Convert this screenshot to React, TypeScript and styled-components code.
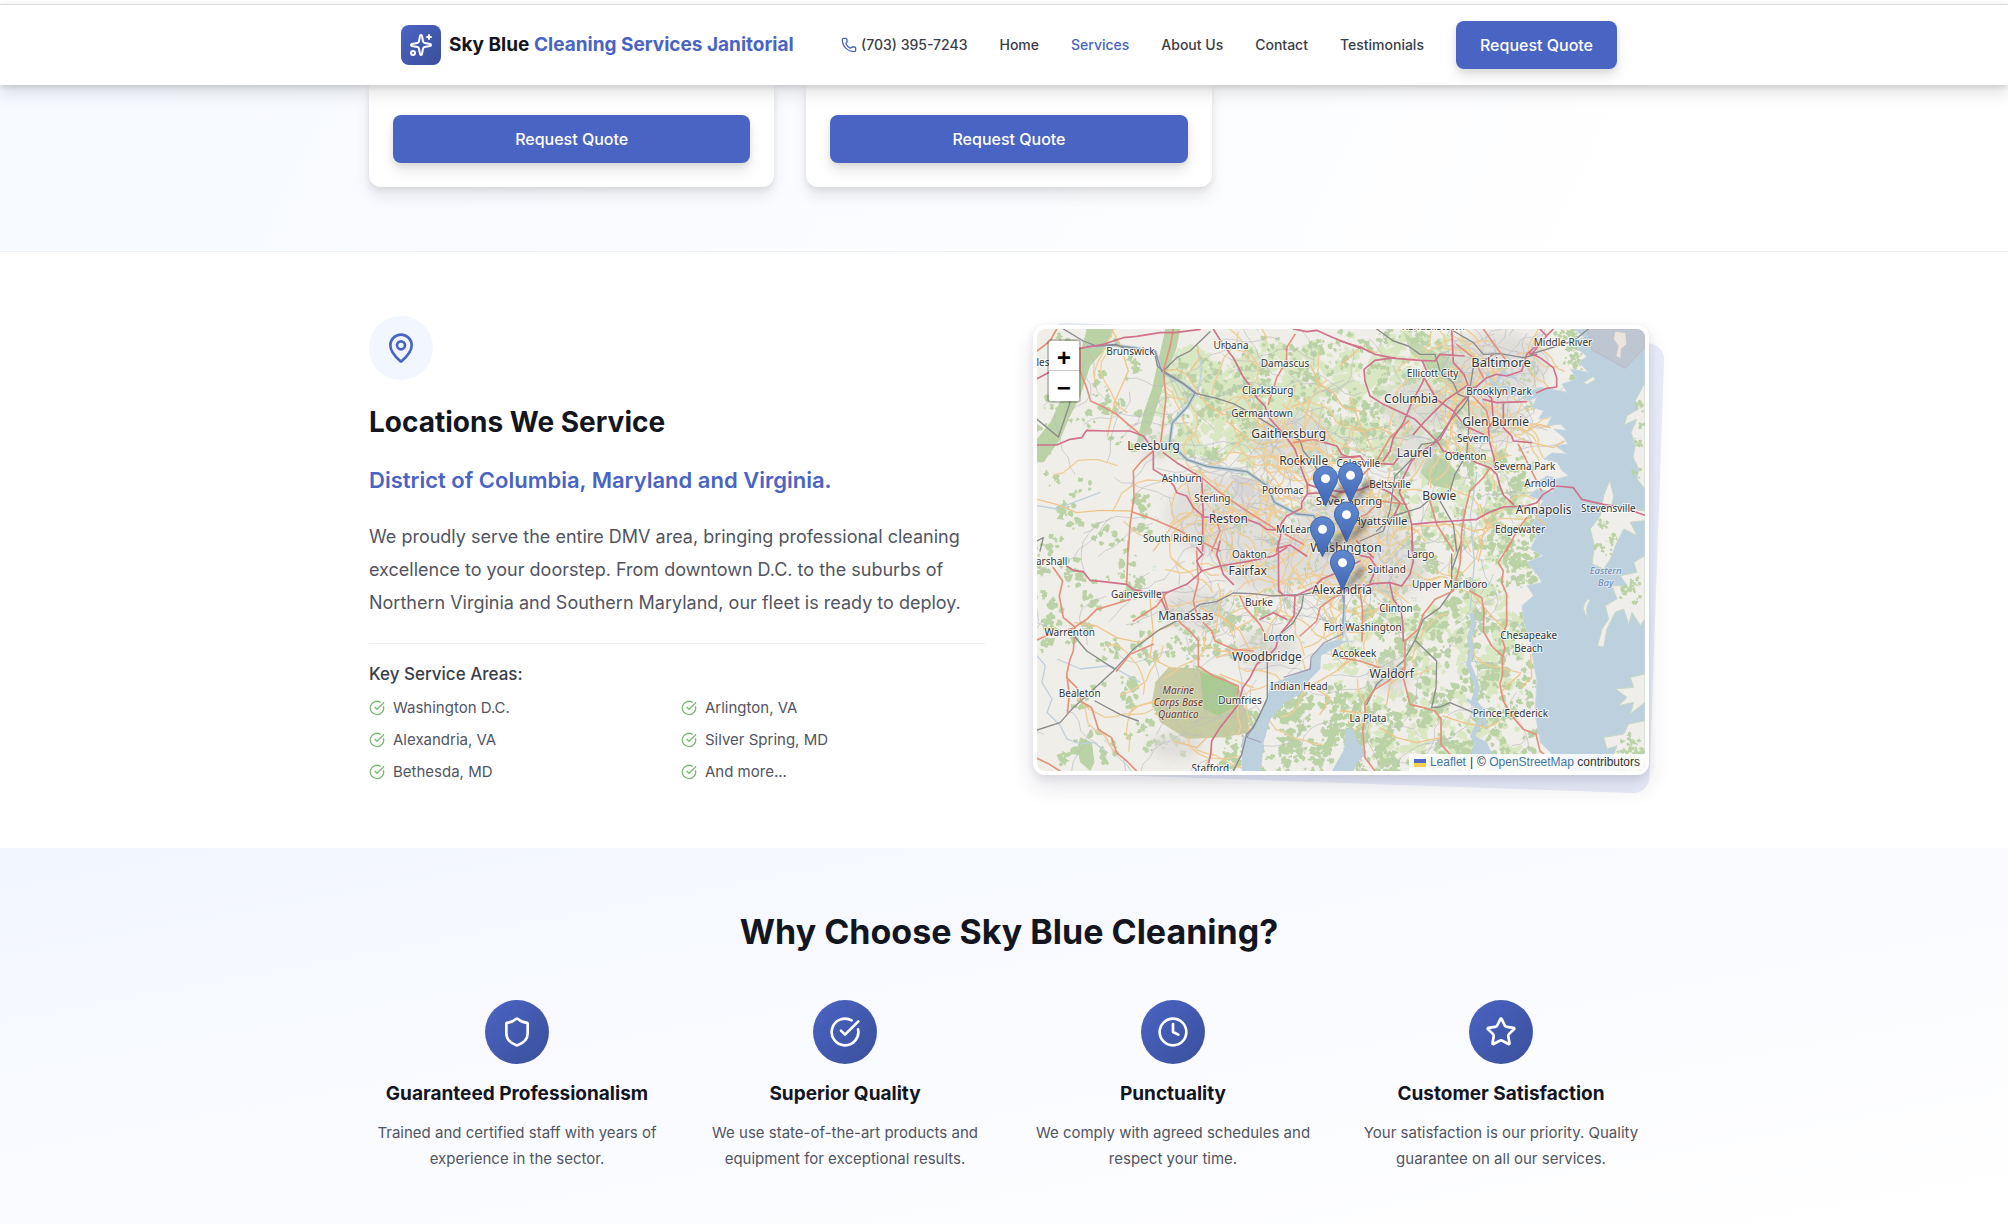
import React from "react";
import styled, { createGlobalStyle } from "styled-components";
import {
  CircleCheckBig,
  Clock,
  MapPin,
  Phone,
  Shield,
  Sparkles,
  Star,
  type LucideIcon,
} from "lucide-react";

const color = {
  brand: "#4a64c3",
  brandDark: "#3a4f9b",
  ink: "#13151f",
  nav: "#3a3e48",
  body: "#52555f",
  tint: "#f2f6ff",
  line: "#eff0f3",
  green: "#7cba74",
};

const GlobalStyle = createGlobalStyle`
  *, *::before, *::after { box-sizing: border-box; }
  body {
    margin: 0;
    background: #fff;
    color: ${color.ink};
    font-family: Inter, "Noto Sans", sans-serif;
    -webkit-font-smoothing: antialiased;
  }
  h1, h2, h3, p, ul { margin: 0; padding: 0; }
  ul { list-style: none; }
  a { text-decoration: none; color: inherit; }
`;

const Page = styled.div`
  display: flex;
  flex-direction: column;
  min-height: 100vh;
  overflow: clip;
`;

const Container = styled.div`
  width: 100%;
  max-width: 1280px;
  margin: 0 auto;
`;

/* ---------- header ---------- */

const Header = styled.header`
  position: sticky;
  top: 0;
  z-index: 10;
  margin-top: 4px;
  padding: 0 22px 0 32px;
  background: #fff;
  border-top: 1px solid #dddddf;
  box-shadow: 0 8px 16px rgba(0, 0, 0, 0.12), 0 2px 5px rgba(0, 0, 0, 0.12);
`;

const HeaderRow = styled(Container)`
  display: flex;
  align-items: center;
  justify-content: space-between;
  min-height: 80px;
  padding: 0 32px;
`;

const Brand = styled.a`
  display: flex;
  align-items: center;
  gap: 8px;
  font-size: 19px;
  line-height: 28px;
  font-weight: 700;
`;

const BrandMark = styled.span`
  display: flex;
  align-items: center;
  justify-content: center;
  width: 40px;
  height: 40px;
  border-radius: 8px;
  color: #fff;
  background: linear-gradient(135deg, ${color.brand}, ${color.brandDark});
`;

const Accent = styled.span`
  color: ${color.brand};
`;

const Nav = styled.nav`
  display: flex;
  align-items: center;
  gap: 32px;
`;

const NavLink = styled.a<{ $active?: boolean }>`
  display: flex;
  align-items: center;
  gap: 4px;
  font-size: 14px;
  line-height: 20px;
  font-weight: 500;
  color: ${(p) => (p.$active ? color.brand : color.nav)};
  svg { color: ${color.brand}; }
`;

const QuoteButton = styled.button<{ $wide?: boolean }>`
  width: ${(p) => (p.$wide ? "100%" : "auto")};
  height: 48px;
  padding: 0 24px;
  border: 0;
  border-radius: 8px;
  background: ${color.brand};
  color: #fff;
  font-family: inherit;
  font-size: 16px;
  line-height: 24px;
  font-weight: 500;
  cursor: pointer;
  box-shadow: 0 8px 14px rgba(0, 0, 0, 0.09), 0 3px 6px rgba(0, 0, 0, 0.08);
`;

/* ---------- service cards ---------- */

const CardsSection = styled.section`
  padding: 0 22px 64px 32px;
  border-bottom: 1px solid ${color.line};
  background: linear-gradient(115deg, #f6f9ff, #fbfcff 45%, #ffffff 85%);
`;

const CardGrid = styled(Container)`
  display: grid;
  grid-template-columns: repeat(3, 1fr);
  gap: 32px;
`;

const Card = styled.article`
  padding: 30px 24px 24px;
  border-radius: 0 0 12px 12px;
  background: #fff;
  box-shadow: 0 10px 15px rgba(0, 0, 0, 0.08), 0 3px 6px rgba(0, 0, 0, 0.08);
`;

/* ---------- locations ---------- */

const Locations = styled.section`
  padding: 64px 22px 64px 32px;
`;

const LocationGrid = styled(Container)`
  display: grid;
  grid-template-columns: 1fr 1fr;
  gap: 48px;
  align-items: center;
`;

const IconDisc = styled.div<{ $solid?: boolean }>`
  display: flex;
  align-items: center;
  justify-content: center;
  width: 64px;
  height: 64px;
  border-radius: 50%;
  color: ${(p) => (p.$solid ? "#fff" : color.brand)};
  background: ${(p) =>
    p.$solid ? `linear-gradient(135deg, ${color.brand}, ${color.brandDark})` : color.tint};
`;

const Title = styled.h2`
  margin-top: 24px;
  font-size: 28px;
  line-height: 36px;
  font-weight: 700;
`;

const Subtitle = styled.p`
  margin-top: 24px;
  font-size: 22px;
  line-height: 32px;
  font-weight: 600;
  color: ${color.brand};
`;

const Lead = styled.p`
  margin: 24px 0;
  font-size: 18px;
  line-height: 33px;
  color: ${color.body};
`;

const Areas = styled.div`
  padding-top: 16px;
  border-top: 1px solid ${color.line};
`;

const AreasTitle = styled.h3`
  margin-bottom: 8px;
  font-size: 17px;
  line-height: 28px;
  font-weight: 500;
  color: ${color.nav};
`;

const AreaList = styled.ul`
  display: grid;
  grid-template-columns: 1fr 1fr;
  gap: 8px;
`;

const Area = styled.li`
  display: flex;
  align-items: center;
  gap: 8px;
  font-size: 15px;
  line-height: 24px;
  color: ${color.body};
  svg { color: ${color.green}; }
`;

/* ---------- map ---------- */

const MapWrap = styled.div`
  position: relative;
  &::before {
    content: "";
    position: absolute;
    inset: 0;
    border-radius: 16px;
    background: #eaedf9;
    transform: translate(8px, 8px) rotate(2deg);
  }
`;

const MapFrame = styled.div`
  position: relative;
  height: 450px;
  overflow: hidden;
  border: 4px solid #fff;
  border-radius: 12px;
  background: #fff;
  box-shadow: 0 12px 22px rgba(30, 35, 70, 0.12), 0 3px 8px rgba(30, 35, 70, 0.09);
`;

const MapSvg = styled.svg`
  display: block;
  width: 100%;
  height: 100%;
  border-radius: 8px 8px 0 0;
  font-family: "Noto Sans", sans-serif;
`;

const ZoomControl = styled.div`
  position: absolute;
  top: 10px;
  left: 10px;
  display: flex;
  flex-direction: column;
  border: 2px solid rgba(0, 0, 0, 0.2);
  border-radius: 4px;
  background-clip: padding-box;
`;

const ZoomButton = styled.button`
  width: 30px;
  height: 30px;
  padding: 8px 0 0;
  border: 0;
  background: #fff;
  color: #000;
  font: bold 24px/22px "Liberation Mono", monospace;
  cursor: pointer;
  &:first-child {
    border-bottom: 1px solid #ccc;
    border-radius: 2px 2px 0 0;
  }
  &:last-child { border-radius: 0 0 2px 2px; }
`;

const Attribution = styled.div`
  position: absolute;
  right: 0;
  bottom: 0;
  display: flex;
  align-items: center;
  gap: 4px;
  padding: 0 5px;
  background: rgba(255, 255, 255, 0.85);
  color: #333;
  font: 12px/17px "Liberation Sans", Arial, sans-serif;
  a { color: #3f76a8; }
`;

type Quad = "nw" | "ne" | "sw" | "se";
const shift: Record<Quad, [number, number]> = {
  nw: [-51, -54],
  ne: [909, -54],
  sw: [-51, 636],
  se: [909, 636],
};

const motorways: Record<Quad, string> = {
  nw: "M580 54L605 95 640 140 668 195 690 225 712 262 735 285 745 318 778 355 803 385 825 415 838 455 850 490 862 520 862 548 845 575 845 592 800 615 782 640 782 675 770 720M51 203L85 185 110 170 130 125 180 112 250 100 310 80 350 76 420 65 470 64 540 55M51 402L110 402 150 385 185 380 200 358 260 360 330 360 370 375 385 395 400 420 400 475 440 500 462 525 470 545 500 555 520 590 548 615 548 720M430 425L470 455 545 500 550 615M545 618L610 620 680 625 720 640 740 655 780 658M820 54L860 62 890 58 940 80 1020 112M862 520L900 532 960 542 1020 535M915 395L950 405 965 430 990 440 1020 436M862 548L915 545 950 560",
  ne: "M0 90L60 108 105 130 165 142 240 148 285 150 300 130 372 135M165 140L105 148 72 175 75 210 90 255 130 280 185 305 225 325 250 350 290 390 310 420 360 430 410 455 450 470 470 490 480 525 490 552 520 580M335 54L340 155 372 190 385 225 430 240 455 262 460 330 445 350 448 390 462 440 465 475M247 150L260 180 245 220 215 275 190 335 160 380 150 420 130 450M640 54L605 90 560 130 545 180 500 195 470 190 440 200 400 235 350 290 320 350 300 385 240 425 215 450 190 500 178 545 205 600 215 640 218 720M255 205L290 265 340 300 375 345 430 370M380 225L320 265 255 330 220 370M215 640L270 635 340 630 410 625 445 605 490 588 560 585 590 575 610 550 650 525 700 530 725 565 790 580 850 590 915 613M570 125L600 140 640 170 650 200 650 228 620 232 590 245M600 54L620 75 575 130M430 265L470 275 560 272M490 280L490 350 515 375 520 390 575 395M0 440L60 435 75 455 160 460 175 440M0 545L50 540 100 520 150 545 180 575 160 620",
  sw: "M140 75L160 88 190 92 210 118 250 122 320 130 340 145 380 155 440 155 500 130 530 105 545 90 600 75 680 62 760 45 800 20M530 20L548 40 530 60 545 90M600 0L590 40 610 100 640 130M775 0L776 150 790 162 825 165 822 225 800 255 775 285 768 320 750 340 710 370 690 410 668 440 655 490 632 520 600 560 575 600 572 640 560 690M780 20L810 12 860 45M825 165L880 140 905 115 950 95 1020 60M420 165L440 210 460 220M720 235L760 215 800 235",
  se: "M0 150L60 140 100 128 150 125 185 135 210 100 220 60 215 0M0 30L90 50 110 80 90 125M150 130L160 175 182 205 188 240 190 300M50 0L100 50",
};
const primaries: Record<Quad, string> = {
  nw: "M460 54L452 100 430 180 438 260 430 330 420 410M180 115L180 180 200 230 212 270 255 290 290 310 330 345 355 365M400 420L365 450 340 480 342 560 330 640 325 720M335 602L400 625 470 655 560 700 600 720M825 70L800 110 800 150 770 200 745 280M51 120L90 90 110 54M545 500L600 545 680 600 760 650 850 700M580 600L600 660 575 720M915 395L880 385 820 395",
  ne: "M535 400L560 450 580 490 605 540M450 470L430 500 390 540 375 600 365 660 362 720M560 620L530 660 500 720M0 640L80 610 120 570 200 580M430 54L470 110 500 150M350 100L400 140 430 200M205 330L150 380 110 450 60 500M385 240L440 300 450 345M270 570L290 640 340 720",
  sw: "M100 80L128 120 118 165 130 230 165 258 160 330 150 355 140 400 148 460 142 520M165 258L200 235 230 205 275 192 330 175M51 297L90 280 160 262M430 160L445 210 480 245 510 270 535 300 535 375 580 405 620 420 655 435 652 460M140 410L170 440 185 482 215 500 235 565 275 590 290 635 320 660 350 690M51 652L85 668 120 690M550 245L575 270 585 300 640 325 700 330M530 30L535 120 520 180 535 240M325 0L320 130M660 165L675 200 720 250 730 270M1020 130L940 170 900 200 890 240 840 285M440 155L410 195 340 240M290 390L330 340 400 310",
  se: "M515 0L475 65 490 90 485 125 500 160 500 250 485 290 495 320 488 350M390 150L425 170 432 210 430 270 455 315 487 345 488 400 480 430 490 480 520 530 550 565 588 580 600 630 612 640M365 0L360 70 340 150 285 175 250 220 235 265 195 300 195 380 190 410 210 490 250 500 285 510 303 535 303 610 330 640M195 378L145 420 105 445 75 485 75 525 68 570 75 650 105 690M60 150L68 210 66 300M0 350L60 360 120 380",
};
const secondaries: Record<Quad, string> = {
  nw: "M51 565L110 580 170 605 240 598 335 600M275 54L300 100 325 180 285 270 262 375M430 180L470 175 500 190 530 235 560 280 610 310 700 320 745 365M530 100L540 140 510 180M870 160L900 220 940 245 970 290 1020 300M650 720L600 680 640 600 600 560 640 510M620 330L680 380 720 400 780 390M500 510L520 600 460 640 400 720M850 300L920 360 940 395",
  ne: "M0 165L60 110 110 125M0 330L70 360 120 350 170 380M30 260L60 340 100 420M575 395L640 410 670 390M520 340L560 360 600 340 630 350M420 580L440 640 420 700M300 640L350 640 400 660 500 640M600 560L590 620 620 640",
  sw: "M165 245L230 255 290 290 360 305 400 275 460 250M390 170L400 280 390 350 470 390M550 310L600 330 680 335 710 350M590 350L660 325 720 320M600 400L700 440M880 430L950 390 990 350M880 440L930 470 900 520M560 590L530 620 460 600M540 200L610 230 660 270 690 330",
  se: "M400 160L450 220 490 260M0 380L60 340M120 560L170 590 230 605 300 590M0 510L60 515 120 530M310 525L370 545 440 560 480 540M200 390L150 430 140 490M540 440L575 410 572 340M480 455L540 400M430 0L415 60",
};
const rails: Record<Quad, string> = {
  nw: "M130 54L190 90 230 105 290 100 345 130M405 130L412 165 430 180 480 210 530 248 590 262 640 278 700 310 740 335 790 365 840 388 850 420 875 450 900 490M430 180L470 140 510 120 570 62M51 325L115 378 145 290 155 255M51 690L70 680 60 720",
  ne: "M110 54L160 90 205 105 240 130 285 130 300 180 340 215 355 250 385 262 370 285 330 330 300 375 280 395 245 400 210 450 165 495 158 540 150 600 130 660 60 690M385 262L388 330 380 430 345 490 330 540 270 565 240 590 160 615 110 660M330 54L400 95 430 130 480 128 550 140 590 130M385 260L400 170 460 130M570 130L700 90 745 54M300 570L340 640 350 720",
  sw: "M51 567L120 545 160 500 280 390 340 325 420 265 480 235 540 190 590 182 640 156 700 158 760 165 850 160 905 150M850 165L845 200 820 245 780 280M742 365L742 470 720 520 700 560 680 580 665 640 640 690M150 270L200 330 285 385M225 480L300 520 355 540",
  se: "M335 40L335 150 300 200 250 235 225 298 190 360 110 430 80 490M225 298L290 360 288 440 275 500 300 498 330 485 400 515M365 0L335 90",
};

const potomac =
  "M150 52L230 48 354 66 374 128 440 165 474 192 452 232 406 282 398 340 450 392 510 412 630 428 690 470 712 520 780 555 830 560 880 640 905 700 920 820";
const patuxent = "M395 215L402 250 388 290 395 330 385 370 402 410 412 440 402 480 430 515 415 550 398 585 430 630 462 690";

type Label = [Quad, number, number, string, number?];
const labels: Label[] = [
  ["nw", 331, 133, "Brunswick"], ["nw", 633, 115, "Urbana"], ["nw", 795, 167, "Damascus"],
  ["nw", 743, 250, "Clarksburg"], ["nw", 726, 319, "Germantown"], ["nw", 806, 381, "Gaithersburg", 36],
  ["nw", 401, 416, "Leesburg", 36], ["nw", 851, 461, "Rockville", 36], ["nw", 485, 513, "Ashburn"],
  ["nw", 577, 572, "Sterling"], ["nw", 788, 549, "Potomac"], ["nw", 625, 635, "Reston", 36],
  ["nw", 823, 666, "McLean"], ["nw", 459, 692, "South Riding"], ["nw", 69, 166, "les"],
  ["ne", 669, 104, "Middle River"], ["ne", 483, 168, "Baltimore", 39], ["ne", 280, 56, "Randallstown"],
  ["ne", 278, 198, "Ellicott City"], ["ne", 477, 252, "Brooklyn Park"], ["ne", 213, 275, "Columbia", 36],
  ["ne", 467, 346, "Glen Burnie", 36], ["ne", 399, 394, "Severn"], ["ne", 223, 438, "Laurel", 36],
  ["ne", 377, 448, "Odenton"], ["ne", 554, 476, "Severna Park"], ["ne", 55, 468, "Colesville"],
  ["ne", 150, 531, "Beltsville"], ["ne", 600, 529, "Arnold"], ["ne", 298, 566, "Bowie", 36],
  ["ne", 611, 608, "Annapolis", 36], ["ne", 805, 602, "Stevensville"], ["ne", 27, 583, "Silver Spring", 34],
  ["ne", 120, 643, "Hyattsville", 34], ["ne", 540, 667, "Edgewater"],
  ["sw", 95, 73, "arshall"], ["sw", 688, 52, "Oakton"], ["sw", 683, 102, "Fairfax", 36],
  ["sw", 349, 170, "Gainesville"], ["sw", 717, 196, "Burke"], ["sw", 498, 236, "Manassas", 36],
  ["sw", 149, 286, "Warrenton"], ["sw", 777, 299, "Lorton"], ["sw", 741, 361, "Woodbridge", 36],
  ["sw", 179, 468, "Bealeton"], ["sw", 837, 446, "Indian Head"], ["sw", 660, 490, "Dumfries"],
  ["sw", 571, 694, "Stafford"],
  ["se", 18, 34, "Washington", 38], ["se", 6, 160, "Alexandria", 36], ["se", 242, 51, "Largo"],
  ["se", 140, 97, "Suitland"], ["se", 329, 142, "Upper Marlboro"], ["se", 168, 213, "Clinton"],
  ["se", 68, 269, "Fort Washington"], ["se", 43, 347, "Accokeek"], ["se", 155, 411, "Waldorf", 36],
  ["se", 84, 543, "La Plata"], ["se", 511, 528, "Prince Frederick"], ["se", 566, 295, "Chesapeake"],
  ["se", 566, 333, "Beach"],
];

/* Pin tips, in map units. */
const pins: [number, number][] = [[865, 530], [940, 520], [928, 638], [856, 682], [916, 782]];

/* Small seeded generator, so the scattered woods and lanes are the same on every render. */
const seeded = (seed: number) => () => {
  seed = (seed * 1664525 + 1013904223) % 4294967296;
  return seed / 4294967296;
};

const patches = (seed: number, count: number, x: number, y: number, w: number, h: number, r: number) => {
  const rnd = seeded(seed);
  let d = "";
  for (let i = 0; i < count; i++) {
    const cx = x + rnd() * w;
    const cy = y + rnd() * h;
    const parts = 3 + Math.floor(rnd() * 5);
    for (let k = 0; k < parts; k++) {
      const px = cx + (rnd() - 0.5) * r * 3.4;
      const py = cy + (rnd() - 0.5) * r * 3.4;
      const size = r * (0.25 + rnd() * 0.8);
      for (let a = 0; a < 9; a++) {
        const q = size * (0.4 + rnd() * 0.8);
        const t = (a / 9) * Math.PI * 2;
        d += `${a ? "L" : "M"}${Math.round(px + Math.cos(t) * q)} ${Math.round(py + Math.sin(t) * q)}`;
      }
      d += "Z";
    }
  }
  return d;
};

const lanes = (seed: number, count: number, x: number, y: number, w: number, h: number, step: number) => {
  const rnd = seeded(seed);
  let d = "";
  for (let i = 0; i < count; i++) {
    let px = x + rnd() * w;
    let py = y + rnd() * h;
    let t = rnd() * Math.PI * 2;
    d += `M${Math.round(px)} ${Math.round(py)}`;
    for (let k = 0; k < 7; k++) {
      t += (rnd() - 0.5) * 1.3;
      px += Math.cos(t) * step;
      py += Math.sin(t) * step;
      d += `L${Math.round(px)} ${Math.round(py)}`;
    }
  }
  return d;
};

const cities: [number, number, number, number][] = [
  [930, 640, 170, 150], [1380, 110, 150, 100], [560, 560, 170, 120], [690, 700, 140, 90],
  [760, 340, 120, 90], [1140, 230, 110, 70], [1370, 270, 90, 70], [470, 840, 100, 60],
  [690, 960, 90, 60], [1060, 720, 110, 80], [1130, 370, 60, 60], [1060, 1040, 60, 50],
  [420, 1250, 80, 40], [350, 350, 50, 35],
];

const RoadLayer = ({ roads, stroke, width }: { roads: Record<Quad, string>; stroke: string; width: number }) => (
  <g fill="none" stroke={stroke} strokeWidth={width} strokeLinejoin="round" strokeLinecap="round">
    {(Object.keys(roads) as Quad[]).map((q) => (
      <path key={q} d={roads[q]} transform={`translate(${shift[q].join(" ")})`} />
    ))}
  </g>
);

const Woods = () => (
  <>
    <g fill="#d9e7c3">
      <path d={patches(3, 130, 390, 70, 470, 310, 22)} />
      <path d={patches(5, 90, 850, 40, 450, 330, 20)} />
      <path d={patches(7, 90, 900, 850, 550, 450, 20)} />
      <path d={patches(8, 60, 1050, 380, 420, 420, 18)} />
    </g>
    <g fill="#bad2a5">
      <path d="M150 0L230 0 205 60 160 110 130 200 95 270 70 330 20 400 0 400 0 330 40 280 70 215 110 150 130 70Z" />
      <path d="M385 0L430 0 418 60 390 130 370 200 345 280 315 350 295 360 320 250 345 180 365 90Z" />
      <path d="M1170 385L1225 390 1260 430 1240 480 1190 470 1150 430Z" />
      <path d="M1100 10L1170 60 1250 90 1290 170 1270 210 1200 140 1120 70Z" opacity=".8" />
      <path d={patches(10, 24, 0, 0, 400, 380, 14)} />
      <path d={patches(11, 42, 0, 400, 380, 560, 14)} />
      <path d={patches(12, 30, 90, 940, 400, 380, 14)} />
      <path d={patches(13, 80, 400, 40, 460, 350, 11)} />
      <path d={patches(14, 80, 850, 0, 460, 380, 11)} />
      <path d={patches(15, 90, 1040, 380, 430, 420, 12)} />
      <path d={patches(16, 135, 930, 800, 560, 520, 14)} />
      <path d={patches(17, 56, 720, 1060, 260, 260, 14)} />
      <path d={patches(18, 36, 380, 820, 320, 180, 12)} />
      <path d={patches(19, 34, 560, 1120, 120, 200, 14)} />
      <path d={patches(20, 30, 1440, 560, 120, 200, 11)} />
      <path d={patches(21, 16, 1560, 0, 90, 170, 10)} />
      <path d="M130 1225L165 1240 172 1300 160 1326 130 1300 120 1260Z" />
    </g>
  </>
);

const Water = () => (
  <g fill="#bdd0de">
    <path
      stroke="#c9d8e0"
      strokeWidth="3"
      d="M1612 0L1640 25 1622 60 1650 82 1625 100 1655 130 1600 120 1620 150 1575 165 1590 190 1540 180 1510 175 1480 186 1440 182 1400 168 1375 180 1400 198 1450 200 1475 215 1500 205 1485 235 1520 245 1505 270 1545 262 1530 290 1570 285 1590 305 1550 300 1580 325 1593 345 1555 350 1590 375 1545 372 1520 390 1560 400 1575 425 1595 440 1560 450 1530 440 1500 462 1540 470 1550 490 1500 480 1475 500 1520 515 1500 540 1465 535 1500 565 1480 590 1500 620 1480 660 1520 680 1470 700 1500 735 1515 760 1470 770 1490 800 1455 830 1460 880 1480 930 1488 990 1500 1060 1494 1150 1510 1240 1560 1290 1600 1326 1824 1326 1824 0Z"
    />
    <path d="M919 770L926 840 922 925 860 945 825 985 815 1020 740 1050 700 1065 690 1110 655 1180 615 1230 615 1326 672 1326 680 1240 700 1170 745 1120 790 1095 820 1050 850 1020 852 980 925 940 975 935 915 935 780Z" />
    <path d="M925 1200L950 1200 962 1240 990 1270 960 1300 950 1326 885 1326 905 1290 922 1260Z" />
    <path d="M1300 1270L1320 1225 1350 1240 1372 1290 1400 1326 1360 1326Z" />
    <g fill="none" stroke="#bdd0de" strokeLinejoin="round">
      <path d={potomac} strokeWidth="11" />
      <path d={patuxent} strokeWidth="15" transform="translate(909 636)" />
      <path strokeWidth="9" d="M1290 1110L1335 1150 1350 1200M1370 180L1395 130 1440 150M1380 190L1350 130" />
      <path strokeWidth="4" d="M0 980L25 1010 15 1060 45 1110 30 1150 70 1190 90 1230 130 1245 170 1240 210 1270M0 530L60 540 110 520 190 490M480 60L495 120 480 200M1320 430L1300 560 1312 700 1300 840M60 990L130 1020 220 1010 310 1060" />
    </g>
  </g>
);

const EasternShore = () => (
  <g fill="#efeeea" stroke="#c6d8c4" strokeWidth="3">
    <path d="M1824 160L1795 215 1805 240 1770 260 1762 288 1800 270 1782 310 1795 350 1788 385 1805 420 1800 450 1824 480Z" />
    <path d="M1718 455L1730 500 1725 530 1770 540 1824 545 1824 575 1780 580 1800 620 1760 600 1740 640 1720 690 1700 720 1665 705 1672 650 1660 600 1690 560 1700 500Z" />
    <path d="M1824 680L1790 700 1800 730 1750 740 1770 770 1725 770 1740 810 1705 830 1715 870 1695 900 1682 950 1700 955 1710 900 1735 850 1760 840 1775 885 1785 850 1810 890 1824 870Z" />
    <path d="M1824 1035L1780 1045 1790 1075 1735 1080 1770 1105 1745 1130 1790 1120 1780 1155 1824 1120Z" />
    <path d="M1824 1175L1775 1185 1760 1215 1700 1225 1710 1260 1740 1250 1725 1290 1770 1326 1824 1326Z" />
    <path d="M1652 810Q1625 840 1655 866Q1640 840 1660 812Z" />
    <path d="M1640 160L1670 142 1675 152 1650 167Z" />
    <path fill="#bad2a5" stroke="none" d={patches(31, 7, 1795, 210, 28, 240, 8) + patches(32, 7, 1685, 570, 50, 100, 8) + patches(33, 8, 1755, 750, 60, 80, 8) + patches(34, 12, 1750, 1220, 70, 90, 10)} />
  </g>
);

const RegionMap = () => (
  <MapSvg viewBox="0 0 1824 1326" preserveAspectRatio="xMidYMid slice" role="img" aria-label="Map of service locations">
    <defs>
      <linearGradient id="pin" x1="0" y1="0" x2="0" y2="1">
        <stop offset="0" stopColor="#6189cf" />
        <stop offset="1" stopColor="#4266b3" />
      </linearGradient>
      <filter id="soft"><feGaussianBlur stdDeviation="16" /></filter>
      <filter id="shade"><feGaussianBlur stdDeviation="2" /></filter>
    </defs>
    <rect width="1824" height="1326" fill="#f0eee9" />
    <Woods />
    <g fill="#d9d7d4" opacity=".7" filter="url(#soft)">
      {cities.map(([x, y, rx, ry]) => <ellipse key={`${x}-${y}`} cx={x} cy={y} rx={rx} ry={ry} />)}
    </g>
    <path fill="#bad2a5" opacity=".8" d={patches(41, 120, 480, 330, 600, 560, 8) + patches(42, 36, 1140, 80, 350, 340, 8)} />
    <path fill="#b9d4dc" opacity=".7" d={patches(43, 60, 350, 60, 1100, 900, 4)} />
    <path fill="#d7d5d5" d="M595 440L650 450 655 505 590 500Z" />
    <path fill="#d8b98a" opacity=".6" filter="url(#soft)" d="M900 560L990 580 980 670 920 690Z" />
    <path fill="#c5c9a0" opacity=".95" d="M355 1060L395 1015 480 1018 560 1045 610 1085 640 1210 560 1225 450 1230 370 1180 345 1120Z" />
    <path fill="#a9ca92" d="M489 1028L560 1050 600 1070 595 1130 545 1160 500 1140Z" />
    <g fill="none" strokeWidth="2" stroke="#bcbcc2">
      <path d={lanes(51, 150, 0, 0, 1450, 1300, 28)} />
      <path d={lanes(52, 110, 480, 350, 600, 500, 20)} />
      <path d={lanes(53, 60, 1150, 0, 380, 400, 20)} />
    </g>
    <g fill="none" strokeWidth="4" stroke="#efcd96">
      <path d={lanes(61, 90, 480, 360, 600, 500, 24)} />
      <path d={lanes(62, 50, 1130, 10, 370, 370, 20)} />
      <path d={lanes(63, 60, 150, 20, 1250, 1250, 30)} />
      <path d={lanes(64, 30, 620, 180, 260, 240, 20)} />
    </g>
    <Water />
    <EasternShore />
    <path fill="#bfc3cd" stroke="#b9a8b8" strokeWidth="2" opacity=".8" d="M1650 0L1664 62 1764 118 1824 55 1824 0Z" />
    <path fill="#ebe3dc" d="M1735 8L1765 12 1768 45 1752 60 1750 88 1738 80 1745 50 1730 30Z" />
    <g fill="none" stroke="#75858a" strokeWidth="4" opacity=".75">
      <path d={potomac} />
      <path d="M924 770L916 915 860 942 822 985 820 1020 740 1045" stroke="#9087a8" />
      <path d="M690 1115L655 1180 630 1225 672 1240" stroke="#9087a8" strokeWidth="3" />
    </g>
    <RoadLayer roads={secondaries} stroke="#eec58a" width={4} />
    <RoadLayer roads={rails} stroke="#8b8b8d" width={4} />
    <RoadLayer roads={primaries} stroke="#e3927c" width={5} />
    <RoadLayer roads={motorways} stroke="#cf728a" width={5} />

    <g textAnchor="middle" fill="#33363a" stroke="#fff" strokeOpacity=".75" strokeWidth="6" strokeLinejoin="round" paintOrder="stroke">
      {labels.map(([q, x, y, name, size = 30]) => (
        <text key={name} x={x + shift[q][0]} y={y + shift[q][1]} fontSize={size}>{name}</text>
      ))}
      <g fontStyle="italic" fill="#713a36" fontSize="30" strokeOpacity=".35">
        <text x="424" y="1096">Marine</text>
        <text x="424" y="1132">Corps Base</text>
        <text x="424" y="1168">Quantico</text>
      </g>
      <g fontStyle="italic" fill="#6688b8" fontSize="29" strokeOpacity=".4">
        <text x="1706" y="734">Eastern</text>
        <text x="1706" y="770">Bay</text>
      </g>
    </g>

    {pins.map(([x, y]) => (
      <g key={`${x}-${y}`} transform={`translate(${x - 37} ${y - 120}) scale(3)`}>
        <path d="M13 40L27 19Q33 13 35 20Q33 29 13 41Z" fill="#2d2a20" opacity=".38" filter="url(#shade)" />
        <path d="M12.500 .5C5.900 .5 .5 5.800 .5 12.500C.5 17 2.500 20 5 24L12.500 40.500L20 24C22.500 20 24.500 17 24.500 12.500C24.500 5.800 19.100 .5 12.500 .5Z" fill="url(#pin)" stroke="#3c68b0" />
        <circle cx="12.500" cy="13" r="4.500" fill="#fff" />
      </g>
    ))}
  </MapSvg>
);

const Flag = () => (
  <svg width="12" height="8" viewBox="0 0 12 8" aria-hidden="true">
    <path fill="#5468c8" d="M0 0h12v4H0z" />
    <path fill="#f2d04c" d="M0 4h12v4H0z" />
  </svg>
);

/* ---------- reasons ---------- */

const Reasons = styled.section`
  flex: 1;
  padding: 64px 22px 48px 32px;
  background: linear-gradient(to bottom right, #f2f6ff, #fafbff 50%, #ffffff);
`;

const ReasonsTitle = styled.h2`
  margin-bottom: 48px;
  font-size: 34px;
  line-height: 40px;
  font-weight: 700;
  text-align: center;
`;

const ReasonGrid = styled(Container)`
  display: grid;
  grid-template-columns: repeat(4, 1fr);
  gap: 32px;
`;

const Reason = styled.article`
  display: flex;
  flex-direction: column;
  align-items: center;
  text-align: center;
`;

const ReasonTitle = styled.h3`
  margin: 16px 0 12px;
  font-size: 19px;
  line-height: 28px;
  font-weight: 700;
`;

const ReasonText = styled.p`
  font-size: 15px;
  line-height: 26px;
  color: ${color.body};
`;

const areas = ["Washington D.C.", "Arlington, VA", "Alexandria, VA", "Silver Spring, MD", "Bethesda, MD", "And more..."];

const reasons: { icon: LucideIcon; title: string; text: string }[] = [
  { icon: Shield, title: "Guaranteed Professionalism", text: "Trained and certified staff with years of experience in the sector." },
  { icon: CircleCheckBig, title: "Superior Quality", text: "We use state-of-the-art products and equipment for exceptional results." },
  { icon: Clock, title: "Punctuality", text: "We comply with agreed schedules and respect your time." },
  { icon: Star, title: "Customer Satisfaction", text: "Your satisfaction is our priority. Quality guarantee on all our services." },
];

export default function App() {
  return (
    <Page>
      <GlobalStyle />
      <Header>
        <HeaderRow>
          <Brand href="#home">
            <BrandMark><Sparkles size={24} /></BrandMark>
            <span>Sky Blue <Accent>Cleaning Services Janitorial</Accent></span>
          </Brand>
          <Nav>
            <NavLink href="tel:7033957243"><Phone size={16} />(703) 395-7243</NavLink>
            <NavLink href="#home">Home</NavLink>
            <NavLink href="#services" $active>Services</NavLink>
            <NavLink href="#about">About Us</NavLink>
            <NavLink href="#contact">Contact</NavLink>
            <NavLink href="#testimonials">Testimonials</NavLink>
            <QuoteButton type="button">Request Quote</QuoteButton>
          </Nav>
        </HeaderRow>
      </Header>

      <CardsSection>
        <CardGrid>
          <Card><QuoteButton type="button" $wide>Request Quote</QuoteButton></Card>
          <Card><QuoteButton type="button" $wide>Request Quote</QuoteButton></Card>
        </CardGrid>
      </CardsSection>

      <Locations>
        <LocationGrid>
          <div>
            <IconDisc><MapPin size={32} /></IconDisc>
            <Title>Locations We Service</Title>
            <Subtitle>District of Columbia, Maryland and Virginia.</Subtitle>
            <Lead>
              We proudly serve the entire DMV area, bringing professional cleaning excellence to your
              doorstep. From downtown D.C. to the suburbs of Northern Virginia and Southern Maryland,
              our fleet is ready to deploy.
            </Lead>
            <Areas>
              <AreasTitle>Key Service Areas:</AreasTitle>
              <AreaList>
                {areas.map((name) => (
                  <Area key={name}><CircleCheckBig size={16} />{name}</Area>
                ))}
              </AreaList>
            </Areas>
          </div>
          <MapWrap>
            <MapFrame>
              <RegionMap />
              <ZoomControl>
                <ZoomButton type="button" aria-label="Zoom in">+</ZoomButton>
                <ZoomButton type="button" aria-label="Zoom out">−</ZoomButton>
              </ZoomControl>
              <Attribution>
                <Flag />
                <a href="#leaflet">Leaflet</a>
                <span>|</span>
                <span>© <a href="#osm">OpenStreetMap</a> contributors</span>
              </Attribution>
            </MapFrame>
          </MapWrap>
        </LocationGrid>
      </Locations>

      <Reasons>
        <ReasonsTitle>Why Choose Sky Blue Cleaning?</ReasonsTitle>
        <ReasonGrid>
          {reasons.map(({ icon: Icon, title, text }) => (
            <Reason key={title}>
              <IconDisc $solid><Icon size={32} /></IconDisc>
              <ReasonTitle>{title}</ReasonTitle>
              <ReasonText>{text}</ReasonText>
            </Reason>
          ))}
        </ReasonGrid>
      </Reasons>
    </Page>
  );
}
